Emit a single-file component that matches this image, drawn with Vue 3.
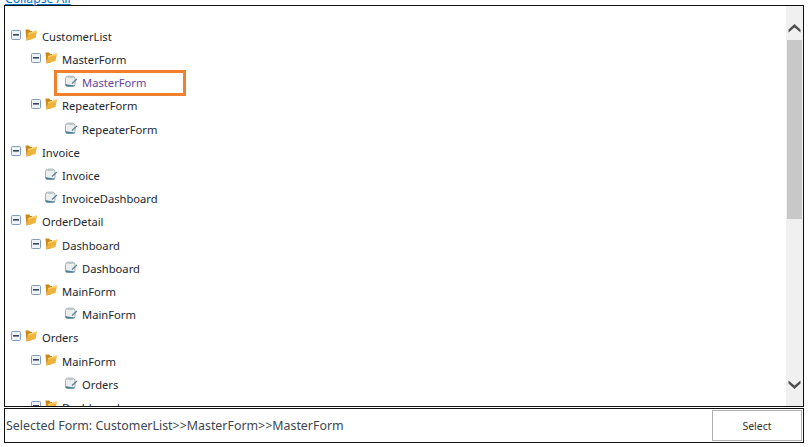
<script setup>
const rows = [
  { label: 'CustomerList', depth: 0, folder: true },
  { label: 'MasterForm', depth: 1, folder: true },
  { label: 'MasterForm', depth: 2, selected: true },
  { label: 'RepeaterForm', depth: 1, folder: true },
  { label: 'RepeaterForm', depth: 2 },
  { label: 'Invoice', depth: 0, folder: true },
  { label: 'Invoice', depth: 1 },
  { label: 'InvoiceDashboard', depth: 1 },
  { label: 'OrderDetail', depth: 0, folder: true },
  { label: 'Dashboard', depth: 1, folder: true },
  { label: 'Dashboard', depth: 2 },
  { label: 'MainForm', depth: 1, folder: true },
  { label: 'MainForm', depth: 2 },
  { label: 'Orders', depth: 0, folder: true },
  { label: 'MainForm', depth: 1, folder: true },
  { label: 'Orders', depth: 2 },
  { label: 'Dashboard', depth: 1, folder: true },
]
</script>

<template>
  <div class="page">
    <a class="collapse" href="#">Collapse All</a>
    <div class="tree-box">
      <div class="tree">
        <div v-for="(row, i) in rows" :key="i" class="row" :class="'d' + row.depth">
          <template v-if="row.folder">
            <svg class="toggle" width="10" height="10" viewBox="0 0 10 10">
              <rect x="0.5" y="0.5" width="9" height="9" rx="1" fill="#eef2f6" stroke="#7f9db9" />
              <rect x="2" y="4" width="6" height="1.6" fill="#34495e" />
            </svg>
            <svg class="folder" width="12" height="12" viewBox="0 0 12 12">
              <path d="M0.5 0.5 L4 0.5 L5.5 2 L7 2 L7 10 L1.5 11.5 Z" fill="#c8871a" />
              <path d="M1.5 11.5 L3 4 L12 1.5 L10.5 9 Z" fill="#efb23a" />
              <path d="M3 4 L12 1.5 L11.6 3.2 L2.7 5.6 Z" fill="#f7d06a" />
            </svg>
          </template>
          <svg v-else class="form" width="13" height="12" viewBox="0 0 13 12">
            <rect x="0.5" y="1.5" width="9.5" height="10" rx="2" fill="#eceeee" stroke="#a4aeb3" />
            <rect x="2.5" y="0.5" width="5.5" height="2.5" fill="#bcc5c9" />
            <path d="M0.5 9 L0.5 10 Q0.5 11.5 2.5 11.5 L8 11.5 Q10 11.5 10 10.5 L4 9.8 Z" fill="#4a8099" />
            <path d="M7 8.5 L12 4" stroke="#5b7f92" stroke-width="1.2" fill="none" />
          </svg>
          <span class="label" :class="{ selected: row.selected }">{{ row.label }}</span>
          <span v-if="row.selected" class="highlight"></span>
        </div>
      </div>
      <div class="scrollbar">
        <button class="arrow up" aria-label="Scroll up">
          <svg width="13" height="9" viewBox="0 0 13 9"><path d="M0.5 5.5 L6.5 0 L12.5 5.5 V8.5 L6.5 3.5 L0.5 8.5 Z" fill="#505050" /></svg>
        </button>
        <div class="track"><div class="thumb"></div></div>
        <button class="arrow down" aria-label="Scroll down">
          <svg width="13" height="9" viewBox="0 0 13 9"><path d="M0.5 0.5 L6.5 5.5 L12.5 0.5 V3.5 L6.5 9 L0.5 3.5 Z" fill="#505050" /></svg>
        </button>
      </div>
    </div>
    <div class="footer">
      <span class="path">Selected Form: CustomerList&gt;&gt;MasterForm&gt;&gt;MasterForm</span>
      <button class="select">Select</button>
    </div>
  </div>
</template>

<style>
html, body { margin: 0; background: #fff; overflow: hidden; }
</style>

<style scoped>
.page {
  width: 812px;
  height: 447px;
  position: relative;
  box-sizing: border-box;
  padding: 5px 8px 0 4px;
  font-family: "Noto Sans", "Open Sans", sans-serif;
  color: #1c2630;
  overflow: hidden;
}
.collapse {
  position: absolute;
  left: 5px;
  top: -9px;
  font-size: 12.2px;
  line-height: 16px;
  color: #0072c6;
}
.tree-box {
  display: flex;
  height: 402px;
  box-sizing: border-box;
  border: 1px solid #111;
  overflow: hidden;
}
.tree {
  flex: 1;
  min-width: 0;
  padding-top: 18.8px;
}
.row {
  position: relative;
  display: flex;
  align-items: center;
  height: 23.2px;
  font-size: 11.2px;
}
.d0 { padding-left: 6px; }
.d1 { padding-left: 26px; }
.d2 { padding-left: 46px; }
.toggle { margin-right: 4px; margin-top: -3px; flex: none; }
.folder { margin-right: 5px; margin-top: -3px; flex: none; }
.form { margin-left: 14px; margin-right: 4px; margin-top: -3px; flex: none; }
.label { white-space: nowrap; }
.selected { color: #6b3fa0; }
.highlight {
  position: absolute;
  left: 49px;
  top: -1px;
  width: 132px;
  height: 26px;
  box-sizing: border-box;
  border: 3px solid #f07f2e;
}
.scrollbar {
  width: 17px;
  flex: none;
  display: flex;
  flex-direction: column;
  background: #f0f0f0;
}
.arrow {
  height: 34px;
  border: 0;
  background: none;
  display: flex;
  align-items: center;
  justify-content: center;
  flex: none;
}
.arrow.up { padding: 10px 0 0; }
.arrow.down { padding: 0 0 10px; }
.track { flex: 1; padding: 0 1px; }
.thumb { height: 179px; background: #c8c8c8; }
.footer {
  display: flex;
  align-items: center;
  justify-content: space-between;
  height: 35px;
  margin-top: 1px;
  box-sizing: border-box;
  border: 1px solid #111;
  padding: 0 1px;
}
.path { font-size: 12.4px; color: #3c4650; white-space: nowrap; }
.select {
  width: 90px;
  height: 31px;
  box-sizing: border-box;
  border: 1px solid #b0b0b0;
  background: #fff;
  font: inherit;
  font-size: 10.5px;
  color: #333;
}
</style>
